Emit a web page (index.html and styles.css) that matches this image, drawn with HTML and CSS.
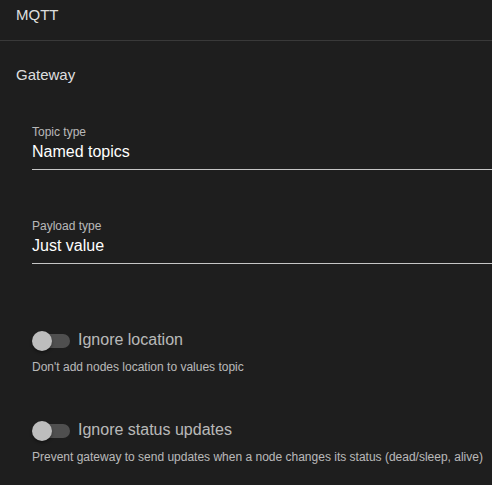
FILE: index.html
```html
<!DOCTYPE html>
<html>
<head>
<meta charset="utf-8">
<link rel="stylesheet" href="styles.css">
</head>
<body>
<div class="panel-header">MQTT</div>
<div class="panel-body">
  <div class="subheader">Gateway</div>
  <div class="fields">
    <div class="field">
      <div class="field-label">Topic type</div>
      <div class="field-value">Named topics</div>
    </div>
    <div class="field field-last">
      <div class="field-label">Payload type</div>
      <div class="field-value">Just value</div>
    </div>
    <div class="switch-block first">
      <div class="switch-row">
        <span class="switch"><span class="track"></span><span class="thumb"></span></span>
        <span class="switch-label">Ignore location</span>
      </div>
      <div class="hint">Don't add nodes location to values topic</div>
    </div>
    <div class="switch-block">
      <div class="switch-row">
        <span class="switch"><span class="track"></span><span class="thumb"></span></span>
        <span class="switch-label">Ignore status updates</span>
      </div>
      <div class="hint">Prevent gateway to send updates when a node changes its status (dead/sleep, alive)</div>
    </div>
  </div>
</div>
</body>
</html>
```
FILE: styles.css
```css
html, body {
  margin: 0;
  padding: 0;
  background: #1e1e1e;
  font-family: "Liberation Sans", Arial, sans-serif;
  color: rgba(255, 255, 255, 0.87);
  overflow: hidden;
}
.panel-header {
  font-size: 15px;
  line-height: 20px;
  padding: 5px 16px 15px;
  border-bottom: 1px solid rgba(255, 255, 255, 0.12);
}
.panel-body {
  padding: 24px 0 0 16px;
}
.subheader {
  font-size: 15px;
  line-height: 20px;
}
.fields {
  padding: 39px 0 0 16px;
}
.field {
  margin-bottom: 48px;
}
.field.field-last {
  margin-bottom: 64px;
}
.field-label {
  font-size: 12px;
  line-height: 16px;
  color: rgba(255, 255, 255, 0.7);
}
.field-value {
  font-size: 16px;
  line-height: 24px;
  color: #ffffff;
  padding-bottom: 5px;
  border-bottom: 1px solid rgba(255, 255, 255, 0.75);
}
.switch-block.first {
  margin-bottom: 43px;
}
.switch-row {
  display: flex;
  align-items: center;
  height: 24px;
}
.switch {
  position: relative;
  width: 38px;
  height: 24px;
  margin-right: 8px;
  flex: none;
}
.track {
  position: absolute;
  left: 2px;
  top: 6px;
  width: 36px;
  height: 14px;
  border-radius: 7px;
  background: rgba(255, 255, 255, 0.22);
}
.thumb {
  position: absolute;
  left: 0;
  top: 3px;
  width: 20px;
  height: 20px;
  border-radius: 50%;
  background: #bdbdbd;
  box-shadow: 0 2px 3px rgba(0, 0, 0, 0.35);
}
.switch-label {
  font-size: 16px;
  line-height: 24px;
  color: rgba(255, 255, 255, 0.7);
}
.hint {
  margin-top: 7px;
  font-size: 12px;
  line-height: 16px;
  color: rgba(255, 255, 255, 0.7);
  white-space: nowrap;
}
```
